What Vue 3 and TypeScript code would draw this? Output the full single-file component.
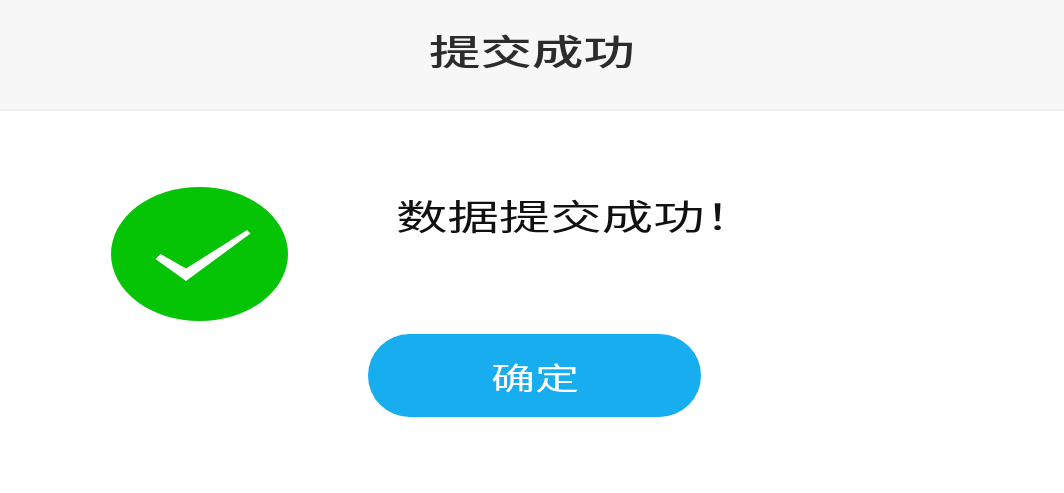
<script setup lang="ts">
const title: string = '提交成功'
const message: string = '数据提交成功！'
const confirmLabel: string = '确定'
</script>

<template>
  <div class="dialog">
    <header class="head">
      <span class="stretch title">{{ title }}</span>
    </header>
    <main class="body">
      <svg class="icon" viewBox="0 0 177 134" width="177" height="134" aria-hidden="true">
        <ellipse cx="88.500" cy="67" rx="88.500" ry="67" fill="#05c305" />
        <path d="M44.500 72 L49.500 67 L75 81.500 L136 43 L139.500 46.500 L75 94 Z" fill="#fff" />
      </svg>
      <section class="content">
        <p class="message"><span class="stretch msg-text">{{ message }}</span></p>
        <button class="ok" type="button"><span class="stretch ok-text">{{ confirmLabel }}</span></button>
      </section>
    </main>
  </div>
</template>

<style>
html, body { margin: 0; background: #fff; }
</style>

<style scoped>
.dialog {
  width: 1064px;
  height: 493px;
  overflow: hidden;
  background: #fff;
  font-family: "Noto Sans CJK SC", "Liberation Sans", sans-serif;
  filter: blur(0.7px);
}
.head {
  height: 109px;
  border-bottom: 2px solid #eeeeee;
  background: #f7f7f7;
  display: flex;
  align-items: center;
  justify-content: center;
}
.stretch {
  display: inline-block;
  white-space: nowrap;
}
.title {
  font-size: 35px;
  line-height: 1;
  font-weight: 500;
  color: #2c2c2c;
  margin-bottom: 11px;
  transform: scaleX(1.47);
}
.body {
  display: flex;
  align-items: flex-start;
  padding: 76px 0 0 111px;
  gap: 80px;
}
.icon { flex: none; }
.content {
  display: flex;
  flex-direction: column;
  align-items: flex-start;
  padding-top: 8px;
}
.message {
  margin: 0 0 99px;
  padding-left: 28px;
  height: 40px;
}
.msg-text {
  font-size: 35px;
  line-height: 40px;
  color: #111;
  transform: scaleX(1.47);
  transform-origin: left center;
}
.ok {
  width: 333px;
  height: 83px;
  border: 0;
  border-radius: 42px;
  background: #17adef;
  color: #fff;
  font: inherit;
  padding: 0;
  display: flex;
  align-items: center;
  justify-content: center;
}
.ok-text {
  font-size: 30px;
  line-height: 1;
  transform: scaleX(1.47);
}
</style>
